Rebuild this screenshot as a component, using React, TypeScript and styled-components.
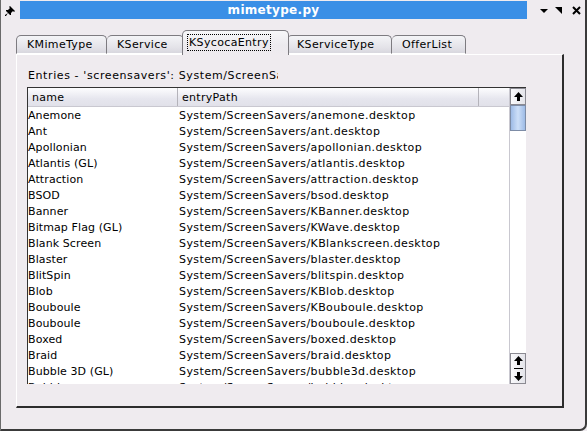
import React from 'react';
import styled, { createGlobalStyle } from 'styled-components';

const GlobalStyle = createGlobalStyle`
  html, body {
    margin: 0;
    padding: 0;
    background: #efebef;
  }
  body {
    font-family: 'DejaVu Sans', 'Liberation Sans', sans-serif;
    font-size: 11px;
  }
`;

const Frame = styled.div`
  width: 587px;
  height: 431px;
  box-sizing: border-box;
  background: #efebef;
  border-left: 1px solid #6a6a6a;
  border-right: 2px solid #3a3a3a;
  border-bottom: 2px solid #3a3a3a;
  border-bottom-right-radius: 7px;
  display: flex;
  flex-direction: column;
  overflow: hidden;
`;

const TitleBar = styled.div`
  height: 20px;
  padding-top: 1px;
  display: flex;
  align-items: stretch;
  box-sizing: border-box;
`;

const PinButton = styled.div`
  width: 19px;
  display: flex;
  align-items: center;
  justify-content: center;
`;

const TitleText = styled.div`
  flex: 1;
  height: 18px;
  background: #3a8fe6;
  color: #fff;
  font-weight: bold;
  font-size: 12px;
  letter-spacing: 0.3px;
  display: flex;
  align-items: center;
  justify-content: center;
`;

const TitleButtons = styled.div`
  width: 58px;
  display: flex;
  align-items: center;
  padding-left: 13px;
  box-sizing: border-box;
`;

const TitleIcon = styled.svg<{ $ml: number }>`
  margin-left: ${(p) => p.$ml}px;
  flex-shrink: 0;
`;

const Content = styled.div`
  padding: 10px 0 0 15px;
  flex: 1;
`;

const TabBar = styled.div`
  display: flex;
  align-items: flex-end;
  height: 24px;
  position: relative;
  z-index: 1;
  letter-spacing: 0.35px;
`;

const Tab = styled.div<{ $active?: boolean; $w: number }>`
  box-sizing: border-box;
  width: ${(p) => p.$w}px;
  height: ${(p) => (p.$active ? 25 : 19)}px;
  margin: ${(p) => (p.$active ? '0 -2px -1px' : '0')};
  padding-left: ${(p) => (p.$active ? 5 : 9)}px;
  border: 1px solid #7d7b80;
  border-bottom: ${(p) => (p.$active ? 'none' : '1px solid #fff')};
  border-left: ${(p) => (p.$active ? '1px solid #7d7b80' : 'none')};
  border-radius: 5px 5px 0 0;
  background: ${(p) =>
    p.$active
      ? 'linear-gradient(#f7f7f9, #eceaee 60%, #efebef)'
      : 'linear-gradient(#f4f4f7, #e3e2e8 70%, #d8d7de)'};
  color: #000;
  display: flex;
  align-items: center;
  position: relative;
  z-index: ${(p) => (p.$active ? 2 : 1)};
  &:first-child {
    border-left: 1px solid #7d7b80;
  }
`;

const TabLabel = styled.span<{ $focus?: boolean }>`
  outline: ${(p) => (p.$focus ? '1px dotted #000' : 'none')};
  padding: 1px 1px;
  margin-top: ${(p) => (p.$focus ? '-2px' : '0')};
`;

const Panel = styled.div`
  width: 548px;
  height: 354px;
  box-sizing: border-box;
  border-top: 1px solid #fff;
  border-left: 1px solid #fff;
  border-right: 2px solid #2c2c2c;
  border-bottom: 2px solid #2c2c2c;
  padding: 14px 0 0 10px;
`;

const EntryLabel = styled.div`
  width: 250px;
  overflow: hidden;
  white-space: nowrap;
  height: 14px;
  line-height: 14px;
  margin-bottom: 4px;
  margin-left: 1px;
  letter-spacing: 0.6px;
`;

const TableBox = styled.div`
  width: 499px;
  height: 297px;
  box-sizing: border-box;
  border-top: 1px solid #333;
  border-left: 1px solid #333;
  background: #fff;
  display: flex;
  overflow: hidden;
`;

const TableMain = styled.div`
  flex: 1;
  overflow: hidden;
`;

const HeaderRow = styled.div`
  display: flex;
  height: 19px;
  background: linear-gradient(#fdfdfe, #e6e6ee 60%, #e1e1e9);
  border-bottom: 1px solid #c9c8d0;
  box-sizing: border-box;
  letter-spacing: 0.3px;
`;

const HeaderCell = styled.div<{ $w: number }>`
  width: ${(p) => p.$w}px;
  box-sizing: border-box;
  border-right: 1px solid #b4b3ba;
  padding-left: 4px;
  display: flex;
  align-items: center;
  &:last-child {
    border-right: none;
  }
`;

const Row = styled.div`
  display: flex;
  height: 16px;
  align-items: center;
  white-space: nowrap;
`;

const Cell = styled.div<{ $w: number; $path?: boolean }>`
  width: ${(p) => p.$w}px;
  padding-left: ${(p) => (p.$path ? 1 : 0)}px;
  letter-spacing: ${(p) => (p.$path ? 0.4 : 0.1)}px;
  box-sizing: border-box;
  overflow: hidden;
`;

const ScrollBar = styled.div`
  width: 17px;
  display: flex;
  flex-direction: column;
  background: #fff;
  border-left: 1px solid #c9c8d0;
  box-sizing: border-box;
`;

const ScrollButton = styled.div<{ $h: number }>`
  height: ${(p) => p.$h}px;
  box-sizing: border-box;
  border: 1px solid #8b8a92;
  background: linear-gradient(90deg, #fafafc, #e4e4ea);
  display: flex;
  flex-direction: column;
  align-items: center;
  justify-content: space-around;
`;

const Thumb = styled.div`
  height: 26px;
  box-sizing: border-box;
  border: 1px solid #7d8ca6;
  background: linear-gradient(90deg, #9ebbe6, #cddff8 50%, #9ebbe6);
`;

const Track = styled.div`
  flex: 1;
`;

const Divider = styled.div`
  width: 9px;
  height: 1px;
  background: #000;
`;

const Arrow = ({ down }: { down?: boolean }) => (
  <svg width="9" height="9" viewBox="0 0 9 9">
    <path
      d={down ? 'M3 0h3v4h3L4.5 9 0 4h3z' : 'M4.5 0 9 5H6v4H3V5H0z'}
      fill="#000"
    />
  </svg>
);

const rows: [string, string][] = [
  ['Anemone', 'anemone.desktop'],
  ['Ant', 'ant.desktop'],
  ['Apollonian', 'apollonian.desktop'],
  ['Atlantis (GL)', 'atlantis.desktop'],
  ['Attraction', 'attraction.desktop'],
  ['BSOD', 'bsod.desktop'],
  ['Banner', 'KBanner.desktop'],
  ['Bitmap Flag (GL)', 'KWave.desktop'],
  ['Blank Screen', 'KBlankscreen.desktop'],
  ['Blaster', 'blaster.desktop'],
  ['BlitSpin', 'blitspin.desktop'],
  ['Blob', 'KBlob.desktop'],
  ['Bouboule', 'KBouboule.desktop'],
  ['Bouboule', 'bouboule.desktop'],
  ['Boxed', 'boxed.desktop'],
  ['Braid', 'braid.desktop'],
  ['Bubble 3D (GL)', 'bubble3d.desktop'],
  ['Bubbles', 'bubbles.desktop'],
];

const tabs: { name: string; w: number }[] = [
  { name: 'KMimeType', w: 91 },
  { name: 'KService', w: 77 },
  { name: 'KSycocaEntry', w: 107 },
  { name: 'KServiceType', w: 105 },
  { name: 'OfferList', w: 74 },
];

function App() {
  return (
    <>
      <GlobalStyle />
      <Frame>
        <TitleBar>
          <PinButton>
            <svg width="11" height="11" viewBox="0 0 11 11">
              <path d="M5 1l5 5-1 1-1-1-2 2 0 2-1 0-2-2-2 3-1 0 0-1 3-2-2-2 0-1 2 0 2-2-1-1z" fill="#000" />
            </svg>
          </PinButton>
          <TitleText>mimetype.py</TitleText>
          <TitleButtons>
            <TitleIcon $ml={0} width="9" height="9" viewBox="0 0 9 9">
              <path d="M0 3h8L4 7z" fill="#000" />
            </TitleIcon>
            <TitleIcon $ml={5} width="9" height="9" viewBox="0 0 9 9">
              <path d="M1 1h7v7z" fill="#000" />
            </TitleIcon>
            <TitleIcon $ml={9} width="9" height="9" viewBox="0 0 9 9">
              <path d="M1 1l7 7M8 1L1 8" stroke="#000" strokeWidth="2" />
            </TitleIcon>
          </TitleButtons>
        </TitleBar>
        <Content>
          <TabBar>
            {tabs.map((t) => (
              <Tab key={t.name} $w={t.w} $active={t.name === 'KSycocaEntry'}>
                <TabLabel $focus={t.name === 'KSycocaEntry'}>{t.name}</TabLabel>
              </Tab>
            ))}
          </TabBar>
          <Panel>
            <EntryLabel>Entries - 'screensavers': System/ScreenSavers</EntryLabel>
            <TableBox>
              <TableMain>
                <HeaderRow>
                  <HeaderCell $w={150}>name</HeaderCell>
                  <HeaderCell $w={301}>entryPath</HeaderCell>
                  <HeaderCell $w={30} />
                </HeaderRow>
                {rows.map(([name, file], i) => (
                  <Row key={i}>
                    <Cell $w={150}>{name}</Cell>
                    <Cell $w={330} $path>
                      System/ScreenSavers/{file}
                    </Cell>
                  </Row>
                ))}
              </TableMain>
              <ScrollBar>
                <ScrollButton $h={17}>
                  <Arrow />
                </ScrollButton>
                <Thumb />
                <Track />
                <ScrollButton $h={31}>
                  <Arrow />
                  <Divider />
                  <Arrow down />
                </ScrollButton>
              </ScrollBar>
            </TableBox>
          </Panel>
        </Content>
      </Frame>
    </>
  );
}

export default App;
